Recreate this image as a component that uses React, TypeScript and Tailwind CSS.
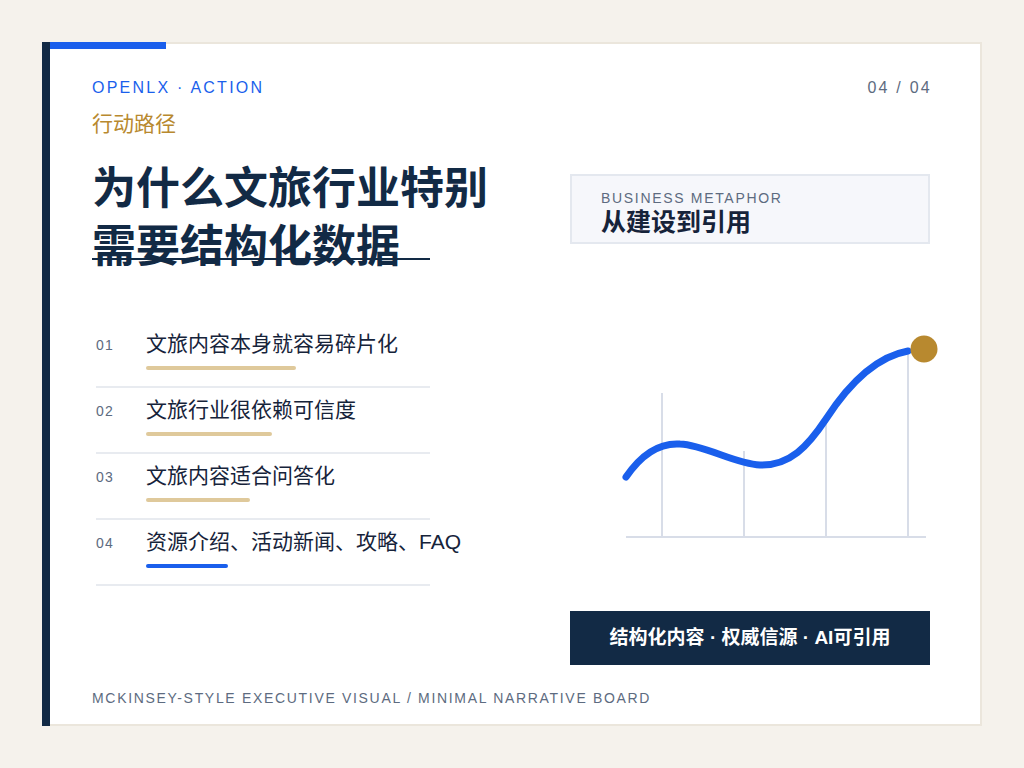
export default function App() {
  const items = [
    { n: "01", t: "文旅内容本身就容易碎片化", w: 150, c: "bg-[#dfc99b]" },
    { n: "02", t: "文旅行业很依赖可信度", w: 126, c: "bg-[#dfc99b]" },
    { n: "03", t: "文旅内容适合问答化", w: 104, c: "bg-[#dfc99b]" },
    { n: "04", t: "资源介绍、活动新闻、攻略、FAQ", w: 82, c: "bg-[#1a5fec]" },
  ];
  const font = { fontFamily: '"Liberation Sans", "Noto Sans CJK SC", sans-serif' };
  return (
    <div className="w-[1024px] h-[768px] bg-[#f5f2ec] p-[42px]" style={font}>
      <div className="relative w-[940px] h-[684px] bg-white border-2 border-l-0 border-[#ebe6dc] flex">
        <div className="w-[8px] h-[684px] -mt-[2px] bg-[#122a45] shrink-0" />
        <div className="absolute left-[8px] -top-[2px] w-[116px] h-[7px] bg-[#1a5fec]" />
        <div className="flex-1 flex flex-col pl-[42px] pr-[48px] pt-[34px] pb-[16px]">
          <div className="flex justify-between items-center h-[20px]">
            <div className="text-[16px] tracking-[0.14em] text-[#1a5fec]">OPENLX · ACTION</div>
            <div className="text-[16px] tracking-[0.14em] text-[#5d6b80]">04 / 04</div>
          </div>
          <div className="flex">
            <div className="w-[388px] shrink-0">
              <div className="mt-[14px] h-[24px] leading-[24px] text-[21px] text-[#b8892f]">行动路径</div>
              <div className="mt-[24px] text-[44px] leading-[58px] font-bold text-[#122a45] whitespace-nowrap">
                为什么文旅行业特别<br />需要结构化数据
              </div>
              <div className="-mt-[18px] w-[338px] h-[2px] bg-[#122a45]" />
              <div className="mt-[62px] w-[334px] ml-[4px]">
                {items.map((it) => (
                  <div key={it.n} className="flex border-b-2 border-[#e8ebf0] pt-[10px] h-[66px]">
                    <div className="w-[50px] shrink-0 text-[14px] leading-[24px] text-[#5d6b80] pt-[1px] tracking-[0.08em]">{it.n}</div>
                    <div>
                      <div className="text-[21px] leading-[24px] text-[#16233a] whitespace-nowrap">{it.t}</div>
                      <div className={`mt-[10px] h-[4px] rounded-full ${it.c}`} style={{ width: it.w }} />
                    </div>
                  </div>
                ))}
              </div>
            </div>
            <div className="ml-[90px] w-[360px] shrink-0">
              <div className="mt-[76px] h-[70px] border-2 border-[#e4e8ef] bg-[#f6f7fb] pl-[29px] pt-[13px]">
                <div className="text-[14px] leading-[18px] tracking-[0.12em] text-[#5d6b80]">BUSINESS METAPHOR</div>
                <div className="text-[25px] leading-[30px] font-bold text-[#16233a]">从建设到引用</div>
              </div>
              <svg className="mt-[87px] block overflow-visible" width="360" height="215" viewBox="570 330 360 215">
                <line x1="626" y1="536" x2="926" y2="536" stroke="#d8dde8" strokeWidth="2" />
                <line x1="662" y1="392" x2="662" y2="536" stroke="#d8dde8" strokeWidth="2" />
                <line x1="744" y1="450" x2="744" y2="536" stroke="#d8dde8" strokeWidth="2" />
                <line x1="826" y1="416" x2="826" y2="536" stroke="#d8dde8" strokeWidth="2" />
                <line x1="908" y1="348" x2="908" y2="536" stroke="#d8dde8" strokeWidth="2" />
                <path d="M626,476 C645,448 665,442 680,443 C705,444 735,463 760,464 C790,465 808,445 826,418 C852,378 880,355 908,350"
                  fill="none" stroke="#1a5fec" strokeWidth="7" strokeLinecap="round" />
                <circle cx="924" cy="348" r="13.5" fill="#b8892f" />
              </svg>
              <div className="mt-[65px] h-[54px] bg-[#122a45] flex items-center justify-center text-white text-[19px] font-bold whitespace-pre">
                结构化内容 · 权威信源 · AI可引用
              </div>
            </div>
          </div>
          <div className="mt-auto h-[20px] leading-[20px] text-[14px] tracking-[0.12em] text-[#5d6b80]">
            MCKINSEY-STYLE EXECUTIVE VISUAL / MINIMAL NARRATIVE BOARD
          </div>
        </div>
      </div>
    </div>
  );
}
